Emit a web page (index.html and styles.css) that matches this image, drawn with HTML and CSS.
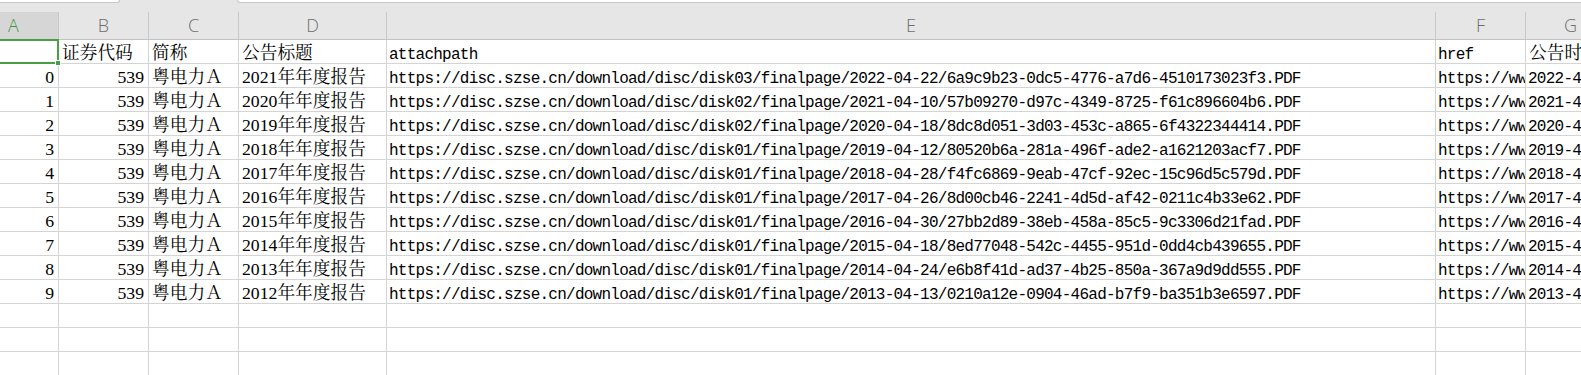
FILE: index.html
```html
<!DOCTYPE html>
<html lang="zh-CN">
<head>
<meta charset="utf-8">
<title>Sheet</title>
<link rel="stylesheet" href="styles.css">
</head>
<body>
<div class="top">
  <div class="bar"><div class="namebox"></div><div class="formula"></div></div>
</div>
<div class="sheet">
  <div class="row colheads">
    <div class="ch sel">A</div><div class="ch">B</div><div class="ch">C</div><div class="ch">D</div><div class="ch">E</div><div class="ch">F</div><div class="ch">G</div>
  </div>
  <div class="row">
    <div class="c selcell"><div class="selbox"><div class="handle"></div></div></div>
    <div class="c">证券代码</div><div class="c">简称</div><div class="c">公告标题</div>
    <div class="c m">attachpath</div><div class="c m">href</div><div class="c">公告时间</div>
  </div>
  <div class="row">
    <div class="c num">0</div><div class="c num">539</div><div class="c">粤电力Ａ</div><div class="c">2021年年度报告</div>
    <div class="c m">https://disc.szse.cn/download/disc/disk03/finalpage/2022-04-22/6a9c9b23-0dc5-4776-a7d6-4510173023f3.PDF</div>
    <div class="c m">https://www.szse.cn/disclosure/listed/bulletinDetail/index.html</div><div class="c m">2022-4-22</div>
  </div>
  <div class="row">
    <div class="c num">1</div><div class="c num">539</div><div class="c">粤电力Ａ</div><div class="c">2020年年度报告</div>
    <div class="c m">https://disc.szse.cn/download/disc/disk02/finalpage/2021-04-10/57b09270-d97c-4349-8725-f61c896604b6.PDF</div>
    <div class="c m">https://www.szse.cn/disclosure/listed/bulletinDetail/index.html</div><div class="c m">2021-4-10</div>
  </div>
  <div class="row">
    <div class="c num">2</div><div class="c num">539</div><div class="c">粤电力Ａ</div><div class="c">2019年年度报告</div>
    <div class="c m">https://disc.szse.cn/download/disc/disk02/finalpage/2020-04-18/8dc8d051-3d03-453c-a865-6f4322344414.PDF</div>
    <div class="c m">https://www.szse.cn/disclosure/listed/bulletinDetail/index.html</div><div class="c m">2020-4-18</div>
  </div>
  <div class="row">
    <div class="c num">3</div><div class="c num">539</div><div class="c">粤电力Ａ</div><div class="c">2018年年度报告</div>
    <div class="c m">https://disc.szse.cn/download/disc/disk01/finalpage/2019-04-12/80520b6a-281a-496f-ade2-a1621203acf7.PDF</div>
    <div class="c m">https://www.szse.cn/disclosure/listed/bulletinDetail/index.html</div><div class="c m">2019-4-12</div>
  </div>
  <div class="row">
    <div class="c num">4</div><div class="c num">539</div><div class="c">粤电力Ａ</div><div class="c">2017年年度报告</div>
    <div class="c m">https://disc.szse.cn/download/disc/disk01/finalpage/2018-04-28/f4fc6869-9eab-47cf-92ec-15c96d5c579d.PDF</div>
    <div class="c m">https://www.szse.cn/disclosure/listed/bulletinDetail/index.html</div><div class="c m">2018-4-28</div>
  </div>
  <div class="row">
    <div class="c num">5</div><div class="c num">539</div><div class="c">粤电力Ａ</div><div class="c">2016年年度报告</div>
    <div class="c m">https://disc.szse.cn/download/disc/disk01/finalpage/2017-04-26/8d00cb46-2241-4d5d-af42-0211c4b33e62.PDF</div>
    <div class="c m">https://www.szse.cn/disclosure/listed/bulletinDetail/index.html</div><div class="c m">2017-4-26</div>
  </div>
  <div class="row">
    <div class="c num">6</div><div class="c num">539</div><div class="c">粤电力Ａ</div><div class="c">2015年年度报告</div>
    <div class="c m">https://disc.szse.cn/download/disc/disk01/finalpage/2016-04-30/27bb2d89-38eb-458a-85c5-9c3306d21fad.PDF</div>
    <div class="c m">https://www.szse.cn/disclosure/listed/bulletinDetail/index.html</div><div class="c m">2016-4-30</div>
  </div>
  <div class="row">
    <div class="c num">7</div><div class="c num">539</div><div class="c">粤电力Ａ</div><div class="c">2014年年度报告</div>
    <div class="c m">https://disc.szse.cn/download/disc/disk01/finalpage/2015-04-18/8ed77048-542c-4455-951d-0dd4cb439655.PDF</div>
    <div class="c m">https://www.szse.cn/disclosure/listed/bulletinDetail/index.html</div><div class="c m">2015-4-18</div>
  </div>
  <div class="row">
    <div class="c num">8</div><div class="c num">539</div><div class="c">粤电力Ａ</div><div class="c">2013年年度报告</div>
    <div class="c m">https://disc.szse.cn/download/disc/disk01/finalpage/2014-04-24/e6b8f41d-ad37-4b25-850a-367a9d9dd555.PDF</div>
    <div class="c m">https://www.szse.cn/disclosure/listed/bulletinDetail/index.html</div><div class="c m">2014-4-24</div>
  </div>
  <div class="row">
    <div class="c num">9</div><div class="c num">539</div><div class="c">粤电力Ａ</div><div class="c">2012年年度报告</div>
    <div class="c m">https://disc.szse.cn/download/disc/disk01/finalpage/2013-04-13/0210a12e-0904-46ad-b7f9-ba351b3e6597.PDF</div>
    <div class="c m">https://www.szse.cn/disclosure/listed/bulletinDetail/index.html</div><div class="c m">2013-4-13</div>
  </div>
  <div class="row">
    <div class="c"></div><div class="c"></div><div class="c"></div><div class="c"></div><div class="c"></div><div class="c"></div><div class="c"></div>
  </div>
  <div class="row">
    <div class="c"></div><div class="c"></div><div class="c"></div><div class="c"></div><div class="c"></div><div class="c"></div><div class="c"></div>
  </div>
  <div class="row">
    <div class="c"></div><div class="c"></div><div class="c"></div><div class="c"></div><div class="c"></div><div class="c"></div><div class="c"></div>
  </div>
</div>
</body>
</html>
```
FILE: styles.css
```css
* { box-sizing: border-box; }
html, body { margin: 0; padding: 0; }
body {
  width: 1581px;
  height: 375px;
  overflow: hidden;
  background: #fff;
  color: #000;
}
.top {
  height: 12px;
  background: #e6e6e6;
}
.bar {
  display: flex;
  height: 3px;
}
.namebox {
  width: 120px;
  background: #fff;
  border-bottom: 1px solid #c6c6c6;
  border-right: 1px solid #c6c6c6;
  border-bottom-right-radius: 3px;
}
.formula {
  flex: 1;
  margin-left: 117px;
  background: #fff;
  border-bottom: 1px solid #c6c6c6;
  border-left: 1px solid #c6c6c6;
  border-bottom-left-radius: 3px;
}
.sheet {
  width: 1647px;
  margin-left: -31px;
}
.row {
  display: grid;
  grid-template-columns: 90px 90px 90px 148px 1049px 90px 90px;
}
.colheads {
  background: #e6e6e6;
  height: 28px;
}
.ch {
  border-right: 1px solid #c8c8c8;
  border-bottom: 1px solid #c2c2c2;
  text-align: center;
  line-height: 26px;
  font-family: "Open Sans", "Noto Sans", sans-serif;
  font-weight: 300;
  font-size: 18px;
  color: #6e6e6e;
}
.ch.sel {
  background: #d6d6d6;
  color: #3d9b3d;
}
.c {
  height: 24px;
  border-right: 1px solid #d4d4d4;
  border-bottom: 1px solid #d4d4d4;
  padding: 3px 3px 0;
  line-height: 20px;
  font-family: "Liberation Serif", "Noto Serif CJK SC", "Noto Sans CJK SC", serif;
  font-size: 17.7px;
  white-space: nowrap;
  overflow: hidden;
}
.num {
  text-align: right;
  padding-right: 4px;
}
.m {
  font-family: "Liberation Mono", monospace;
  font-size: 16px;
  letter-spacing: -0.75px;
  padding-top: 5px;
  padding-left: 2px;
}
.selcell {
  position: relative;
  overflow: visible;
}
.selbox {
  position: absolute;
  top: -1px;
  left: -1px;
  right: -1px;
  bottom: -1px;
  border: 2px solid #4a9f45;
  z-index: 2;
}
.handle {
  position: absolute;
  right: -4px;
  bottom: -4px;
  width: 6px;
  height: 6px;
  background: #4a9f45;
  border: 1px solid #fff;
}
```
